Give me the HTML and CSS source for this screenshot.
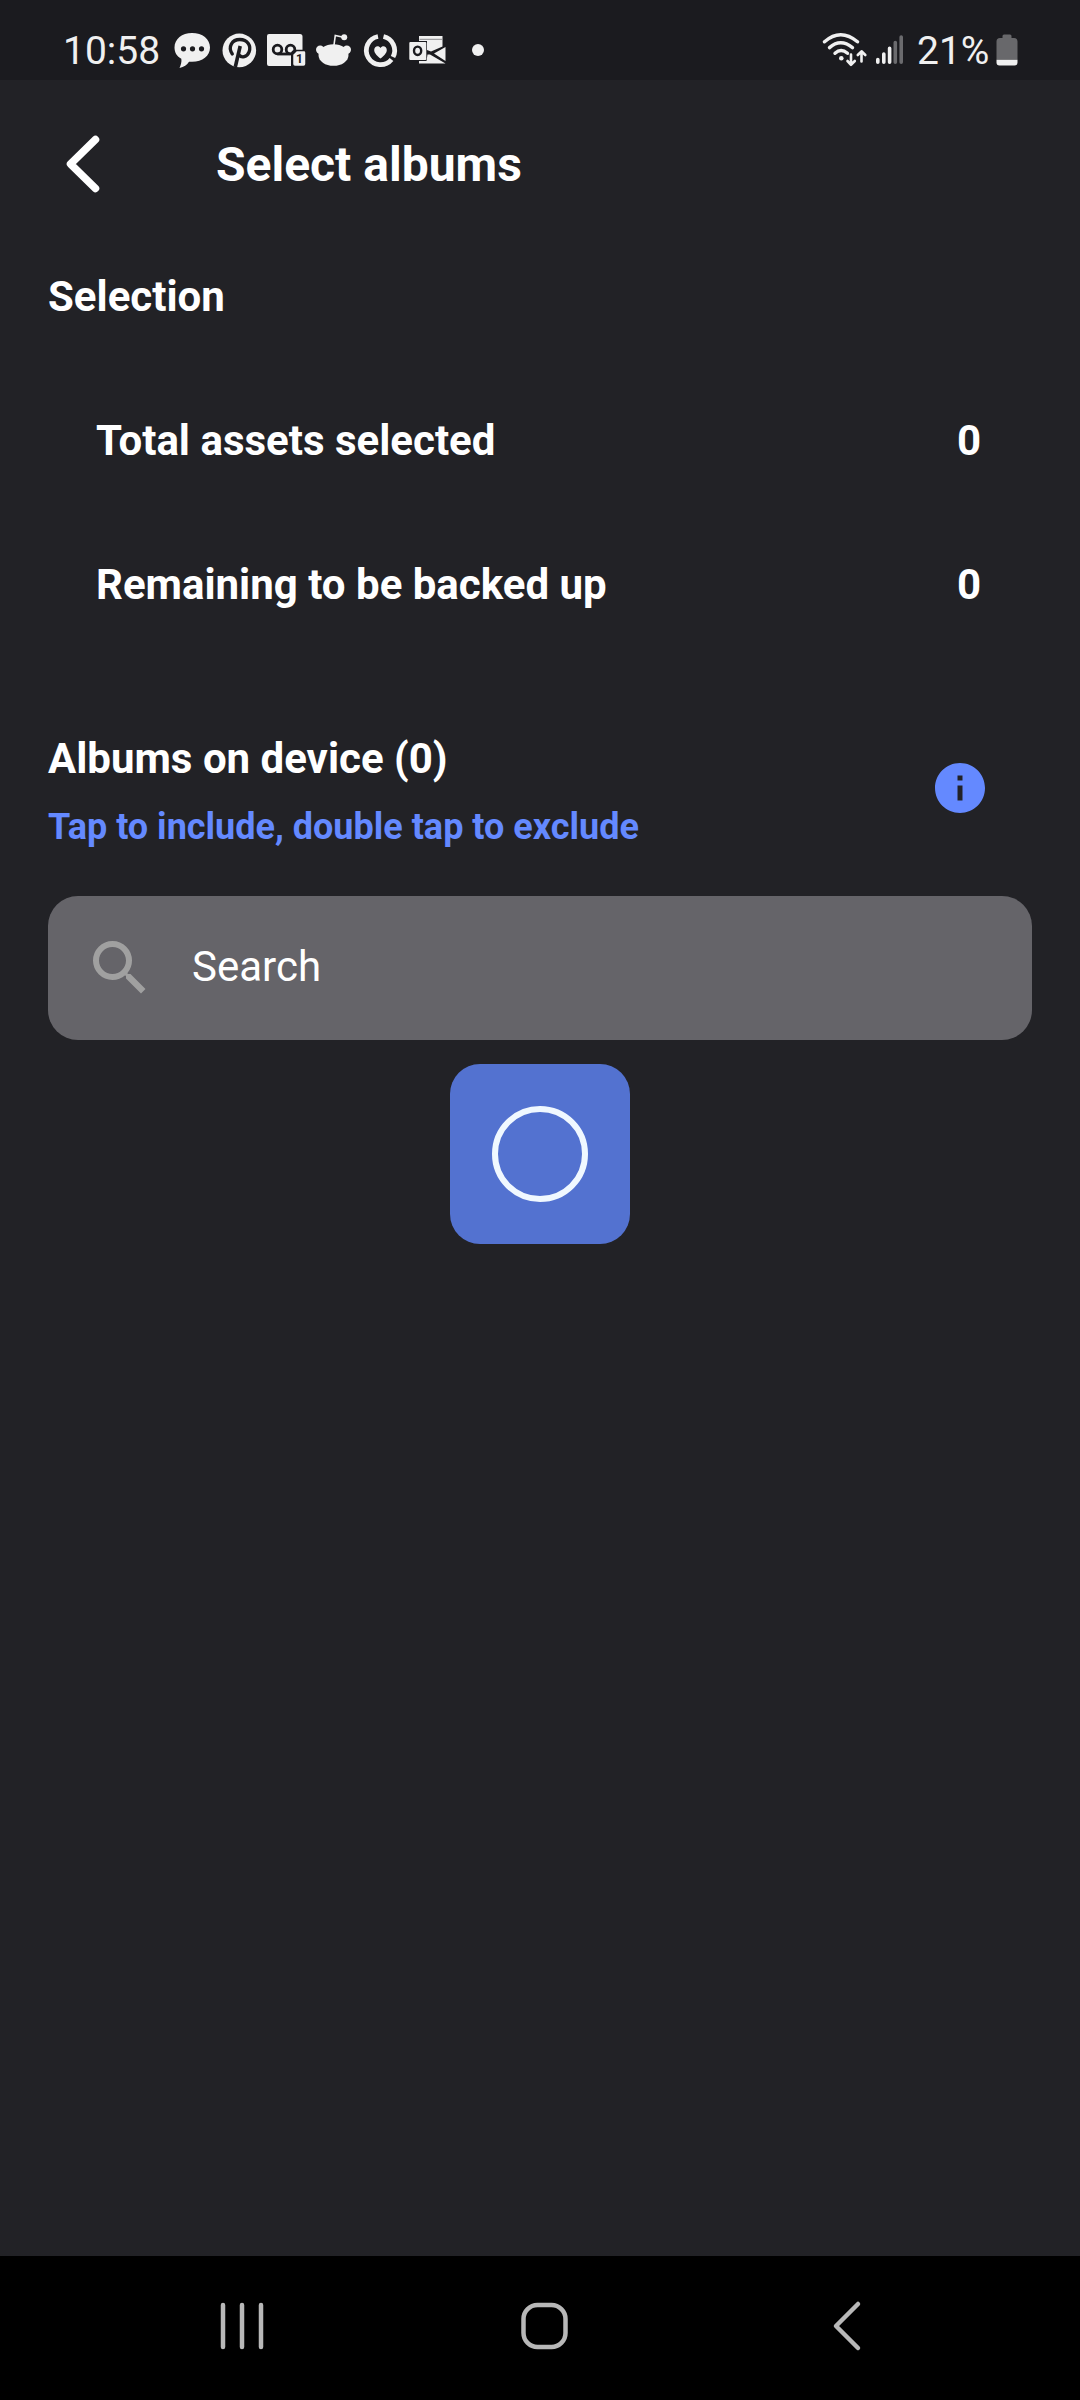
FILE: index.html
```
<!DOCTYPE html>
<html lang="en">
<head>
  <meta charset="UTF-8">
  <meta name="viewport" content="width=device-width, initial-scale=1.0">
  <title>Select albums</title>
  <link rel="stylesheet" href="styles.css">
</head>
<body>
  <div class="screen">
    <!-- Status bar -->
    <div class="status-bar">
      <span class="clock">10:58</span>
      <div class="notifications">
        <!-- messages -->
        <svg width="40" height="40" viewBox="0 0 40 40">
          <path fill="#f0f0f0" d="M20 3C10 3 2.500 9 2.500 17.500c0 5 2.500 9 6.800 11.300.6 3-.4 6.200-1.800 9.200 4.500-1 7.500-3.200 9.500-6.300 12 1.300 21-5 21-14.200C38 9 30.500 3 20 3z"/>
          <g fill="#1b1b1f"><circle cx="11.500" cy="18.800" r="2.600"/><circle cx="20.500" cy="18.800" r="2.600"/><circle cx="29.500" cy="18.800" r="2.600"/></g>
        </svg>
        <!-- pinterest -->
        <svg width="40" height="40" viewBox="0 0 40 40">
          <circle cx="20.300" cy="20.400" r="16.800" fill="#f0f0f0"/>
          <path fill="none" stroke="#1b1b1f" stroke-width="3.300" stroke-linecap="round" d="M13.300 24C8.500 17 13 9.500 20.800 9.500c8 0 11.500 6.500 9.300 12.300-2 5.300-7.600 6.400-10 3.200"/>
          <path fill="none" stroke="#1b1b1f" stroke-width="3.600" d="M21.200 16 16.300 37"/>
        </svg>
        <!-- voicemail -->
        <svg width="40" height="40" viewBox="0 0 40 40">
          <path fill="#f0f0f0" d="M3 4h31a2.500 2.500 0 0 1 2.500 2.500V20H29a4 4 0 0 0-4 4v12H3a2 2 0 0 1-2-2V6a2 2 0 0 1 2-2z"/>
          <g fill="none" stroke="#1b1b1f" stroke-width="2.800"><circle cx="11.500" cy="19.500" r="4.300"/><circle cx="24.500" cy="19.500" r="4.300"/><path d="M11.500 24h13"/></g>
          <path fill="#f0f0f0" stroke="#1b1b1f" stroke-width="1.500" d="M30.500 20.500H38a2 2 0 0 1 2 2V34a2.500 2.500 0 0 1-2.500 2.500H29A2.500 2.500 0 0 1 26.500 34v-9.500z"/>
          <text class="badge-count" x="30" y="33.200">1</text>
        </svg>
        <!-- reddit -->
        <svg width="40" height="40" viewBox="0 0 40 40">
          <g fill="#f0f0f0"><ellipse cx="20.500" cy="25" rx="15" ry="10.800"/><circle cx="7.200" cy="19.800" r="4.200"/><circle cx="33.800" cy="19.800" r="4.200"/><circle cx="31.200" cy="7.200" r="3"/></g>
          <path fill="none" stroke="#f0f0f0" stroke-width="1.600" d="M21 15 22.300 5.500l8 1.700"/>
        </svg>
        <!-- health -->
        <svg width="40" height="40" viewBox="0 0 40 40">
          <g fill="none" stroke="#f0f0f0" stroke-width="4.800"><path d="M23.500 6.500A14.200 14.200 0 0 1 33 27"/><path d="M31.500 29.500A14.200 14.200 0 1 1 18 6.500"/></g>
          <path fill="#f0f0f0" d="M20.500 28.500c-2.800-2.400-6.300-5.200-6.300-8.600 0-4 4.600-5 6.300-1.900 1.700-3.100 6.300-2.100 6.300 1.900 0 3.400-3.500 6.200-6.300 8.600z"/>
        </svg>
        <!-- outlook -->
        <svg width="40" height="40" viewBox="0 0 40 40">
          <path fill="#f0f0f0" d="M12 6h23.500v10.500L24 21.500l-4-1.500v-9h-8zM38.500 17v14L27 23.500zM12 33.500V31h7.500l1-6.500h2.500l15.500 9z"/>
          <path stroke="#8a8a8c" stroke-width="1" d="M12.500 9.300h22.500"/>
          <rect x="2.300" y="12" width="17" height="18" rx="1" fill="#f0f0f0"/>
          <ellipse cx="10.600" cy="20.800" rx="3.600" ry="4.200" fill="none" stroke="#1b1b1f" stroke-width="2.400"/>
        </svg>
        <!-- more notifications -->
        <svg width="40" height="40" viewBox="0 0 40 40">
          <circle cx="24" cy="20" r="6" fill="#f0f0f0"/>
        </svg>
      </div>
      <div class="system-icons">
        <!-- wifi -->
        <svg class="wifi" width="50" height="40" viewBox="0 0 50 40">
          <g fill="none" stroke="#f0f0f0" stroke-width="3.400" stroke-linecap="round">
            <path d="M5.500 11.800q16-14 33 0"/>
            <path d="M10.500 17.600q11-9.600 23 0"/>
            <path d="M16 23.300q6-5.400 12.500 0"/>
          </g>
          <circle cx="22.300" cy="28.300" r="2.300" fill="#f0f0f0"/>
          <path fill="none" stroke="#f0f0f0" stroke-width="2.600" stroke-linecap="round" stroke-linejoin="round" d="M32 24.500v9.500M28.500 31l3.500 3.800 3.800-3.800M42.500 31.500V22M38.800 25l3.700-3.700 3.800 3.700"/>
        </svg>
        <!-- signal -->
        <svg width="30" height="40" viewBox="0 0 30 40">
          <g fill="none" stroke="#f0f0f0" stroke-width="3.600" stroke-linecap="round">
            <path d="M3.800 29.500v2.700M9.800 24v8.200M15.600 18.200v14"/>
            <path stroke="#6b6b6e" d="M21.300 12.500v19.700M27.200 7v25.200"/>
          </g>
        </svg>
        <span class="battery-text">21%</span>
        <!-- battery -->
        <svg width="22" height="40" viewBox="0 0 22 40">
          <path fill="#68686b" d="M6.500 8V6A1.500 1.500 0 0 1 8 4.500h6A1.500 1.500 0 0 1 15.500 6v2H18a3.500 3.500 0 0 1 3.500 3.500V29.800H.5V11.500A3.500 3.500 0 0 1 4 8z"/>
          <path fill="#f0f0f0" d="M.5 29.800h21v2.700a3 3 0 0 1-3 3h-15a3 3 0 0 1-3-3z"/>
        </svg>
      </div>
    </div>

    <header class="app-bar">
      <svg class="back" width="48" height="72" viewBox="0 0 48 72">
        <path d="M35.500 11.500 10.500 36l25 24.500"/>
      </svg>
      <h1>Select albums</h1>
    </header>

    <main>
      <h2>Selection</h2>
      <div class="info-row"><span>Total assets selected</span><span>0</span></div>
      <div class="info-row"><span>Remaining to be backed up</span><span>0</span></div>

      <div class="albums-header">
        <div class="albums-title">
          <h2>Albums on device (0)</h2>
          <p>Tap to include, double tap to exclude</p>
        </div>
        <svg width="60" height="60" viewBox="0 0 24 24">
          <path fill="#6489ff" d="M12 2C6.480 2 2 6.480 2 12s4.480 10 10 10 10-4.480 10-10S17.520 2 12 2zm1 15h-2v-6h2v6zm0-8h-2V7h2v2z"/>
        </svg>
      </div>

      <div class="search">
        <svg width="72" height="72" viewBox="0 0 24 24">
          <path fill="#a0a0a0" d="M15.500 14h-.79l-.28-.27A6.471 6.471 0 0 0 16 9.500 6.500 6.500 0 1 0 9.500 16c1.610 0 3.090-.59 4.230-1.570l.27.28v.79l5 4.990L20.490 19l-4.990-5zm-6 0C7.010 14 5 11.990 5 9.500S7.010 5 9.500 5 14 7.010 14 9.500 11.990 14 9.500 14z"/>
        </svg>
        <span>Search</span>
      </div>

      <div class="loader"><div class="ring"></div></div>
    </main>

    <!-- System navigation -->
    <nav class="nav-bar">
      <svg width="60" height="60" viewBox="0 0 60 60">
        <path d="M11 9v42M30 9v42M49 9v42"/>
      </svg>
      <svg width="60" height="60" viewBox="0 0 60 60">
        <rect x="8.500" y="9" width="42" height="42" rx="14"/>
      </svg>
      <svg width="60" height="60" viewBox="0 0 60 60">
        <path d="M41 8 19 30l22 22"/>
      </svg>
    </nav>
  </div>
</body>
</html>
```

FILE: styles.css
```
* {
  box-sizing: border-box;
}
body {
  margin: 0;
  background-color: #222226;
  color: white;
  font-family: Roboto, "Liberation Sans", sans-serif;
}
svg {
  display: block;
  flex: none;
}
h1, h2, p {
  margin: 0;
}
.screen {
  display: flex;
  flex-direction: column;
  width: 1080px;
  height: 2400px;
}

/* Status bar */
.status-bar {
  display: flex;
  align-items: flex-start;
  height: 80px;
  padding: 30px 62px 0 63px;
  background-color: #1b1b1f;
  color: #f0f0f0;
  font-size: 39px;
  line-height: 42px;
}
.clock {
  width: 109px;
}
.notifications {
  display: flex;
  gap: 7px;
}
.system-icons {
  display: flex;
  margin-left: auto;
}
.wifi {
  margin-right: 5px;
}
.battery-text {
  width: 79px;
  margin-left: 13px;
}
.badge-count {
  font-size: 12px;
  font-weight: 700;
  fill: #1b1b1f;
}

/* App bar */
.app-bar {
  display: flex;
  align-items: center;
  height: 168px;
  padding-left: 60px;
}
.app-bar h1 {
  margin-left: 108px;
  padding-top: 2px;
  font-size: 48px;
  font-weight: 700;
  line-height: 56px;
}
.back path {
  fill: none;
  stroke: white;
  stroke-width: 7.500;
  stroke-linecap: round;
  stroke-linejoin: round;
}

main {
  flex: 1;
  padding: 25px 48px 0;
}
h2 {
  font-size: 42px;
  font-weight: 700;
  line-height: 48px;
}
.info-row {
  display: flex;
  justify-content: space-between;
  align-items: center;
  height: 144px;
  padding: 0 51px 0 48px;
  font-size: 42px;
  font-weight: 700;
}
h2 + .info-row {
  margin-top: 47px;
}
.albums-header {
  display: flex;
  justify-content: space-between;
  align-items: center;
  height: 126px;
  margin-top: 69px;
  padding-right: 42px;
}
.albums-title {
  padding-top: 6px;
}
.albums-header p {
  margin-top: 23px;
  color: #6489ff;
  font-size: 36px;
  font-weight: 700;
  line-height: 42px;
}

.search {
  display: flex;
  align-items: center;
  height: 144px;
  margin-top: 45px;
  padding-left: 36px;
  border-radius: 30px;
  background-color: #656469;
  font-size: 42px;
}
.search span {
  margin-left: 36px;
  padding-bottom: 4px;
}

.loader {
  display: flex;
  justify-content: center;
  align-items: center;
  width: 180px;
  height: 180px;
  margin: 24px auto 0;
  border-radius: 30px;
  background-color: #5372d0;
}
.ring {
  width: 96px;
  height: 96px;
  border: 6px solid #f0f8ff;
  border-radius: 50%;
}

/* Navigation bar */
.nav-bar {
  display: flex;
  justify-content: space-between;
  align-items: center;
  height: 144px;
  padding: 0 203px 4px 212px;
  background-color: black;
}
.nav-bar svg {
  fill: none;
  stroke: #b8b8b8;
  stroke-width: 4.500;
  stroke-linecap: round;
  stroke-linejoin: round;
}
```
